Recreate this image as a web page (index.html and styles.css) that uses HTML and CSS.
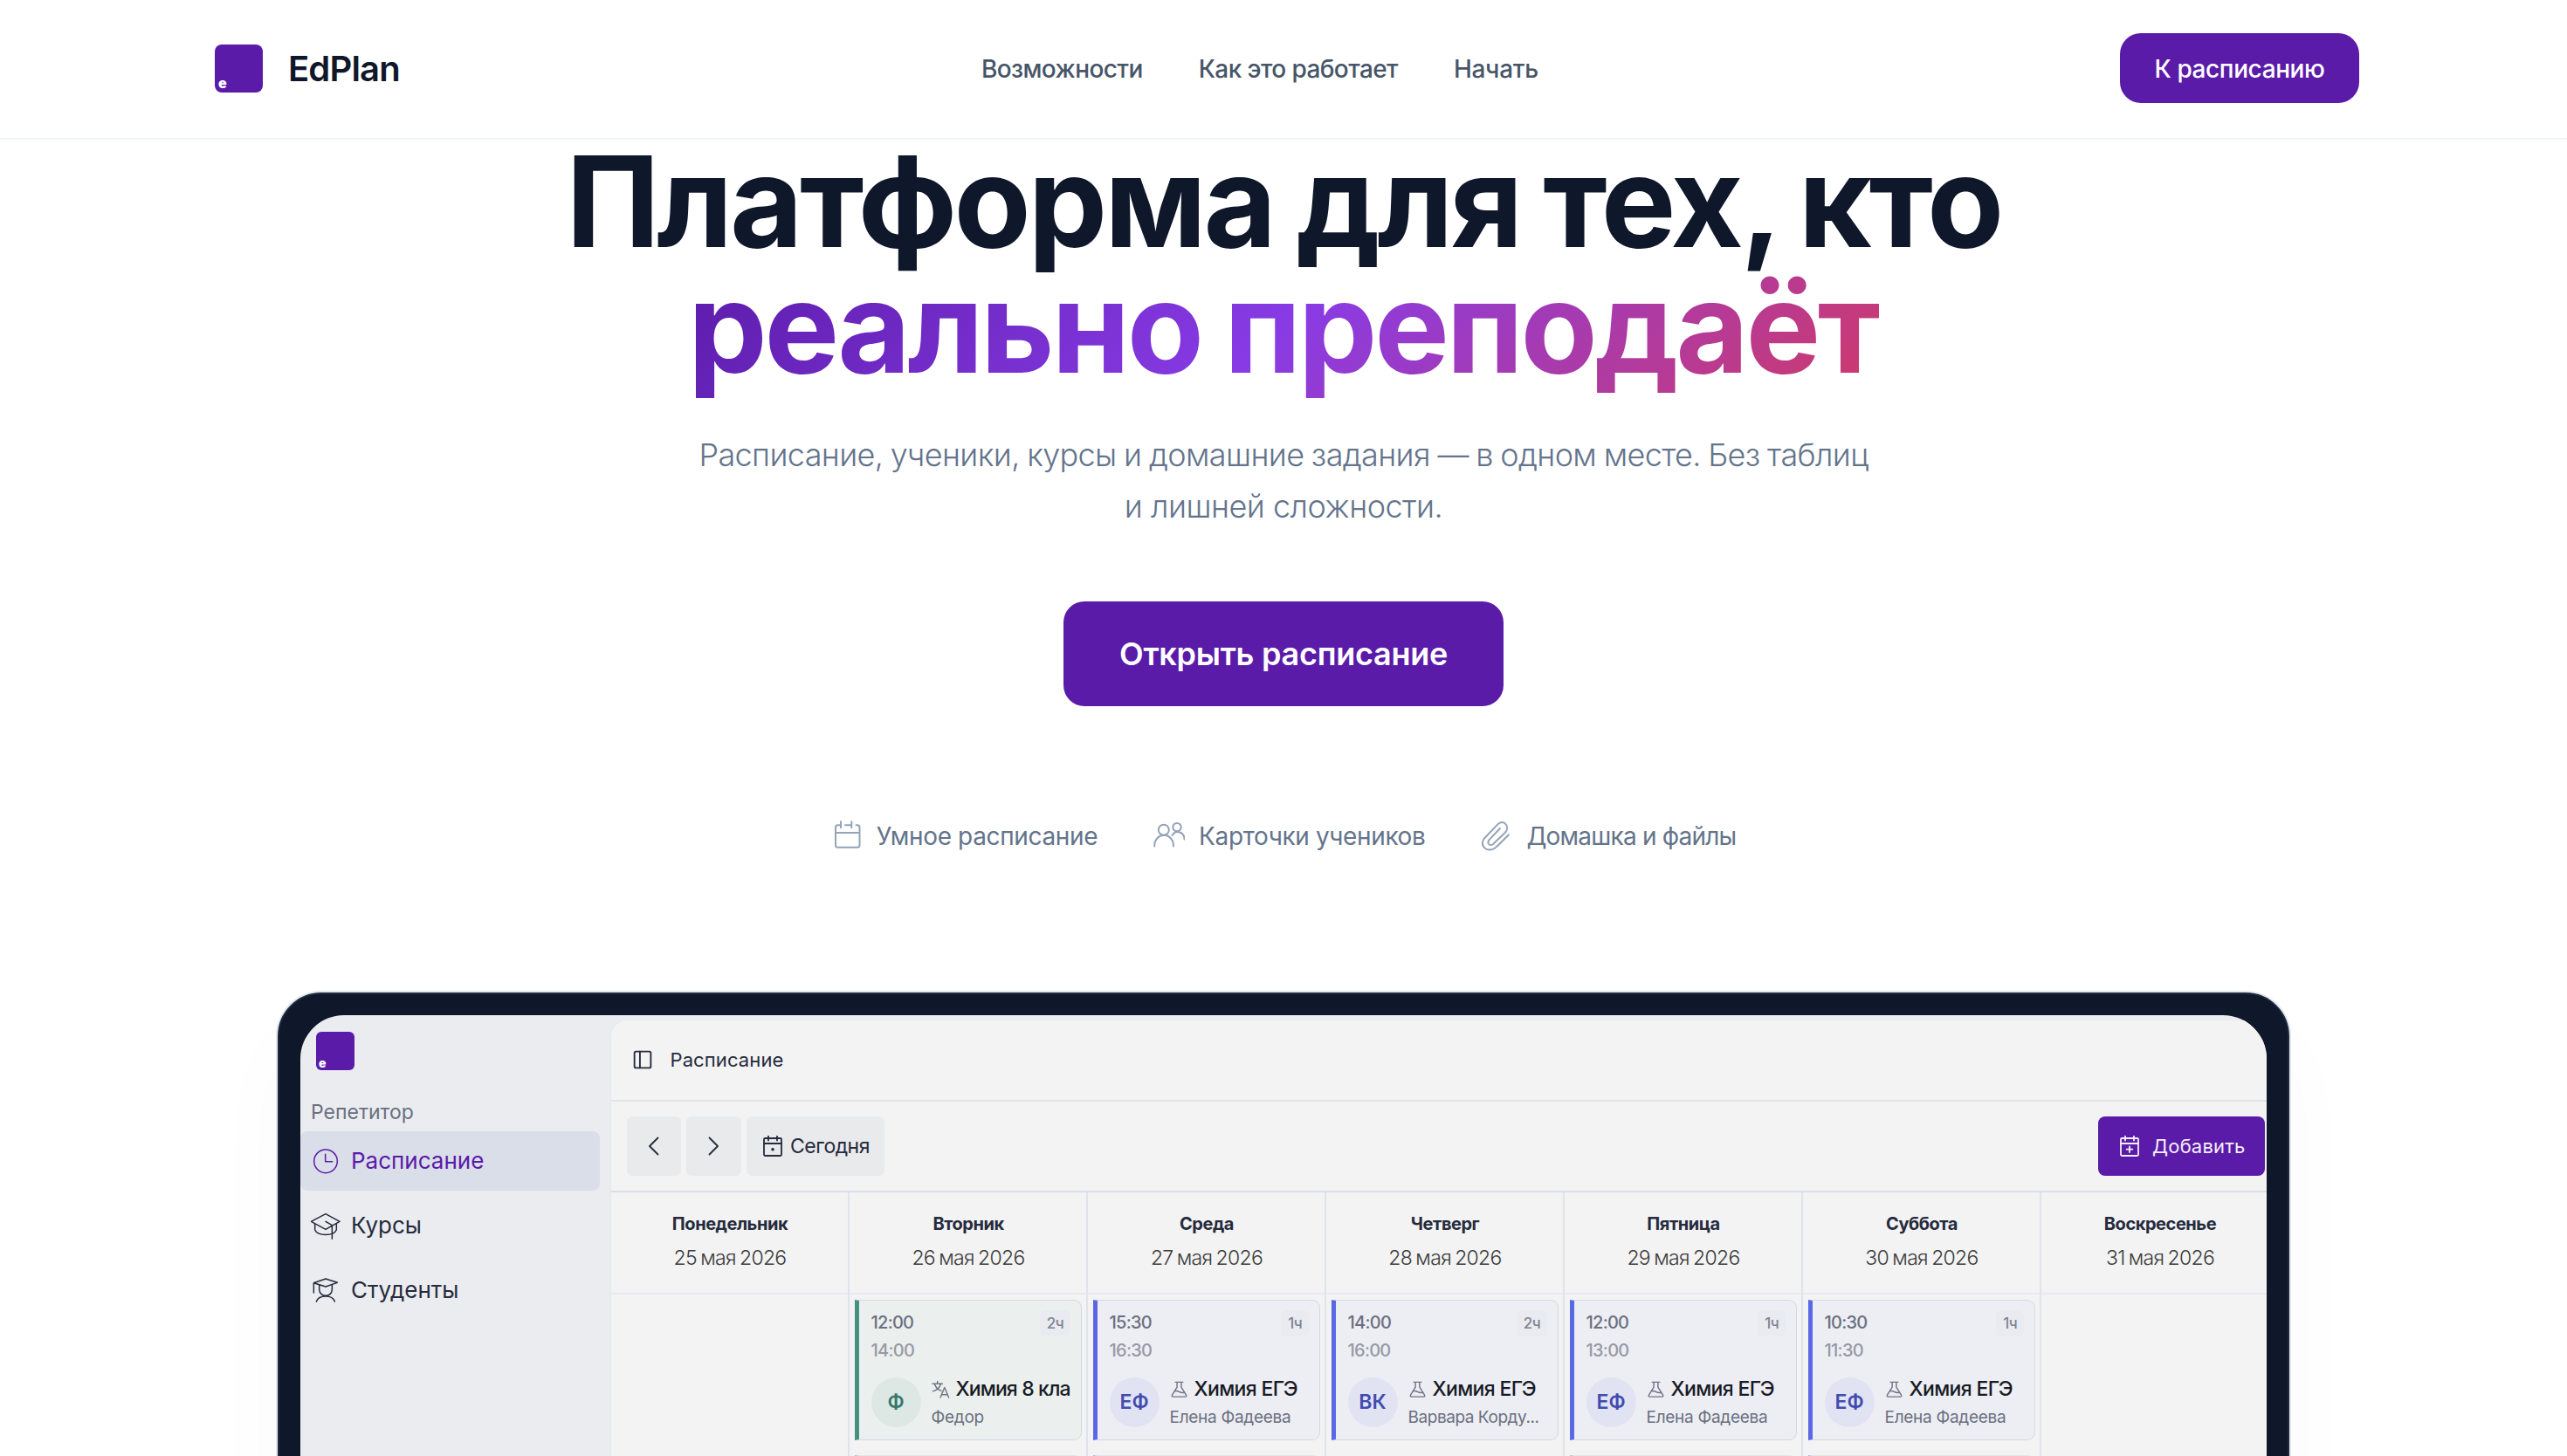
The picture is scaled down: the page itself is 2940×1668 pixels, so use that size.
FILE: index.html
```html
<!DOCTYPE html>
<html lang="ru">
<head>
<meta charset="utf-8">
<title>EdPlan</title>
<link rel="stylesheet" href="styles.css">
</head>
<body>
<svg class="sprite" aria-hidden="true">
  <symbol id="flask" viewBox="0 0 22 22"><path d="M6.5 2.5h9M8.5 2.5v6L2.6 18q-.8 2 1.2 2h14.4q2 0 1.2-2L13.500 8.500v-6M5.500 13.500q3-1 5.500.5t6.500 1"/></symbol>
  <symbol id="translate" viewBox="0 0 22 22"><path d="M1 4.500h12M7 1.500v3M3.500 4.500q1.500 6 8 8.500M11 4.500Q9 11.500 1.500 13.500M10.500 21l5-12 5 12M12.200 17.500h6.600"/></symbol>
</svg>

<header class="site-header">
  <a class="brand"><span class="logo">e</span><span class="brand-name">EdPlan</span></a>
  <nav class="nav"><a class="nav-a">Возможности</a><a class="nav-b">Как это работает</a><a class="nav-c">Начать</a></nav>
  <a class="cta-small">К расписанию</a>
</header>

<main class="hero">
  <h1 class="title">Платформа для тех, кто<br><span class="accent">реально преподаёт</span></h1>
  <p class="lead"><span class="lead-first">Расписание, ученики, курсы и домашние задания — в одном месте. Без таблиц</span><br><span>и лишней сложности.</span></p>
  <a class="cta">Открыть расписание</a>
  <ul class="features">
    <li><svg viewBox="951 939 36 36"><path d="M962 945.300h-3.500q-2.500 0-2.500 2.500v20.500q0 2.500 2.500 2.500h22.500q2.500 0 2.500-2.500v-20.500q0-2.500-2.500-2.500h-1.500M967 945.300h7.300M962 941.300v7M974.300 941.300v7M956 954h27.500"/></svg><span class="f-a">Умное расписание</span></li>
    <li><svg viewBox="1321 939 36 36"><circle cx="1332.800" cy="950.700" r="6"/><circle cx="1348" cy="947.600" r="4.700"/><path d="M1322.200 969.500c0-17 21.800-17 21.800 0M1342.500 957c4-6.500 14-4.500 14 4.500"/></svg><span class="f-b">Карточки учеников</span></li>
    <li><svg viewBox="50 42 108 108" class="clip"><path d="M146 94L105 134C90 150 70 148 62 138C52 128 54 112 66 102L108 58C118 48 130 50 136 58C143 66 141 78 134 86L92 126C86 131 80 130 77 126C73 121 75 116 80 110L116 72"/></svg><span class="f-c">Домашка и файлы</span></li>
  </ul>
</main>

<section class="device">
  <div class="screen">
    <aside class="sidebar">
      <span class="logo logo-sm">e</span>
      <div class="group">Репетитор</div>
      <a class="item active"><svg viewBox="36 450 102 102"><circle cx="87" cy="502" r="40"/><path d="M86 478V503H110"/></svg><span>Расписание</span></a>
      <a class="item"><svg viewBox="36 674 102 102"><path d="M37 711L87 685L135 711L87 738ZM50 719V740C60 762 114 762 124 740V719M87 711L109 724V771"/></svg><span>Курсы</span></a>
      <a class="item"><svg viewBox="36 896 102 102"><path d="M46 922L87 908L127 921L87 935ZM46 922V956M65 929V945C66 973 108 973 109 945V929M55 986C64 962 110 962 118 986"/></svg><span>Студенты</span></a>
    </aside>
    <div class="panel">
      <div class="topbar"><svg viewBox="0 0 20 20"><rect x="1.500" y="1.500" width="17" height="17" rx="1.500"/><path d="M7.200 1.500v17"/></svg><span>Расписание</span></div>
      <div class="toolbar">
        <a class="tool square"><svg viewBox="0 0 24 24"><path d="M16.500 2.500L7 12l9.500 9.500"/></svg></a>
        <a class="tool square"><svg viewBox="0 0 24 24"><path d="M7.500 2.500L17 12l-9.500 9.500"/></svg></a>
        <a class="tool today"><svg viewBox="0 0 24 24"><rect x="2" y="3" width="20" height="20" rx="1.200"/><path d="M2 9h20M7 .5v5M17 .5v5"/><circle cx="12" cy="15.700" r="1.800" class="dot"/></svg><span>Сегодня</span></a>
        <a class="tool add"><svg viewBox="0 0 24 24"><rect x="2" y="3" width="20" height="20" rx="1.200"/><path d="M2 9h20M7 .5v5M17 .5v5M12 12.500v6.500M8.700 15.700h6.600"/></svg><span>Добавить</span></a>
      </div>
      <div class="week">
        <div class="day"><div class="day-head"><b>Понедельник</b><span>25 мая 2026</span></div></div>
        <div class="day"><div class="day-head"><b>Вторник</b><span>26 мая 2026</span></div>
          <article class="lesson green"><div class="when"><div><time>12:00</time><time class="end">14:00</time></div><i class="len">2ч</i></div>
            <div class="who"><span class="avatar">Ф</span><div class="info"><div class="subject long"><svg><use href="#translate"/></svg><span>Химия 8 кла</span></div><div class="name">Федор</div></div></div></article>
          <article class="lesson next"></article>
        </div>
        <div class="day"><div class="day-head"><b>Среда</b><span>27 мая 2026</span></div>
          <article class="lesson"><div class="when"><div><time>15:30</time><time class="end">16:30</time></div><i class="len">1ч</i></div>
            <div class="who"><span class="avatar">ЕФ</span><div class="info"><div class="subject"><svg><use href="#flask"/></svg><span>Химия ЕГЭ</span></div><div class="name">Елена Фадеева</div></div></div></article>
          <article class="lesson next"></article>
        </div>
        <div class="day"><div class="day-head"><b>Четверг</b><span>28 мая 2026</span></div>
          <article class="lesson"><div class="when"><div><time>14:00</time><time class="end">16:00</time></div><i class="len">2ч</i></div>
            <div class="who"><span class="avatar">ВК</span><div class="info"><div class="subject"><svg><use href="#flask"/></svg><span>Химия ЕГЭ</span></div><div class="name cut">Варвара Корду...</div></div></div></article>
        </div>
        <div class="day"><div class="day-head"><b>Пятница</b><span>29 мая 2026</span></div>
          <article class="lesson"><div class="when"><div><time>12:00</time><time class="end">13:00</time></div><i class="len">1ч</i></div>
            <div class="who"><span class="avatar">ЕФ</span><div class="info"><div class="subject"><svg><use href="#flask"/></svg><span>Химия ЕГЭ</span></div><div class="name">Елена Фадеева</div></div></div></article>
          <article class="lesson green next"></article>
        </div>
        <div class="day"><div class="day-head"><b>Суббота</b><span>30 мая 2026</span></div>
          <article class="lesson"><div class="when"><div><time>10:30</time><time class="end">11:30</time></div><i class="len">1ч</i></div>
            <div class="who"><span class="avatar">ЕФ</span><div class="info"><div class="subject"><svg><use href="#flask"/></svg><span>Химия ЕГЭ</span></div><div class="name">Елена Фадеева</div></div></div></article>
          <article class="lesson next"></article>
        </div>
        <div class="day"><div class="day-head"><b>Воскресенье</b><span>31 мая 2026</span></div></div>
      </div>
    </div>
  </div>
</section>
</body>
</html>
```
FILE: styles.css
```css
* { box-sizing: border-box; }
body {
  margin: 0;
  height: 1668px;
  overflow: hidden;
  background: #fff;
  color: #0f172a;
  font-family: Inter, "Liberation Sans", sans-serif;
}
svg { display: block; flex: none; fill: none; stroke: currentColor; stroke-linecap: round; stroke-linejoin: round; }
.sprite { width: 0; height: 0; position: absolute; }

/* header */
.site-header {
  height: 160px;
  padding: 0 238px 2px 246px;
  border-bottom: 2px solid #f1f5f9;
  display: flex;
  align-items: center;
  justify-content: space-between;
}
.brand { display: flex; align-items: center; gap: 29px; }
.brand-name { font-size: 40px; font-weight: 600; letter-spacing: -.85px; }
.logo {
  width: 55px; height: 55px;
  border-radius: 8px;
  background: #5b1ba9;
  color: #fff;
  font-size: 16px; font-weight: 900; line-height: 20px;
  display: flex; align-items: flex-end;
  padding: 0 0 1px 4px;
}
.nav { display: flex; gap: 64px; padding-top: 2px; font-size: 28px; font-weight: 500; color: #475569; letter-spacing: -.6px; }
.nav-c { letter-spacing: -.3px; }
.cta-small {
  width: 274px; height: 80px;
  padding-top: 1px;
  border-radius: 24px;
  background: #5b1ba9; color: #fff;
  font-size: 28px; font-weight: 500; letter-spacing: -.4px;
  display: flex; align-items: center; justify-content: center;
}

/* hero */
.hero { display: flex; flex-direction: column; align-items: center; text-align: center; }
.title { margin: -1px 0 0; font-size: 144px; line-height: 144px; font-weight: 700; letter-spacing: -3.4px; word-spacing: -4.500px; white-space: nowrap; }
.accent {
  background: linear-gradient(135deg, #5b1ba9 0%, #883be5 50%, #d03a68 100%);
  -webkit-background-clip: text; background-clip: text;
  color: transparent;
}
.lead { margin: 45px 0 0; font-size: 36px; line-height: 58.5px; font-weight: 300; color: #64748b; letter-spacing: -.5px; white-space: nowrap; }
.lead-first { letter-spacing: -.64px; word-spacing: -1px; }
.cta {
  margin-top: 80px;
  width: 504px; height: 120px;
  border-radius: 24px;
  background: #5b1ba9; color: #fff;
  font-size: 36px; font-weight: 600; letter-spacing: -.26px;
  display: flex; align-items: center; justify-content: center;
}
.features { margin: 130px 0 0; padding: 0; list-style: none; display: flex; gap: 64px; font-size: 28px; line-height: 38px; color: #64748b; letter-spacing: -.36px; }
.features li { display: flex; gap: 16px; height: 36px; }
.features svg { width: 36px; height: 36px; stroke-width: 2; color: #94a3b8; }
.features svg.clip { stroke-width: 6; }
.features .f-c { letter-spacing: -.8px; }

/* device */
.device {
  width: 2304px; height: 1400px;
  margin: 161.500px auto 0;
  padding: 24px;
  border: 2px solid #1e293b;
  border-radius: 50px;
  background: #0f172a;
  box-shadow: 0 0 0 2px #e2e8f0, 0 50px 100px rgba(15, 23, 42, .025);
}
.screen { height: 1340px; border-radius: 50px; overflow: hidden; background: #ebecf0; display: flex; color: #252b3d; }

.sidebar { flex: 0 0 355.500px; padding: 19px 12.500px 0 0; }
.logo-sm { width: 44px; height: 44px; margin-left: 18px; border-radius: 6px; font-size: 14px; padding: 0 0 0 3px; line-height: 17px; }
.group { margin: 32px 0 0 12px; font-size: 23px; line-height: 32px; color: #6b7080; }
.item { height: 68px; margin-bottom: 6px; border-radius: 8px; display: flex; align-items: center; padding-left: 12px; gap: 12px; font-size: 26px; }
.item svg { width: 34px; height: 34px; stroke-width: 4.500; }
.item.active { margin-top: 6px; background: #dadee8; color: #5b1ba9; }

.panel { flex: 1 0 1911px; margin-top: 6.500px; border-top-left-radius: 18px; background: #f3f3f3; box-shadow: -1px 0 0 #e6e8ee; }
.topbar { height: 92.500px; border-bottom: 2px solid #e1e3ea; display: flex; align-items: center; padding-left: 25px; gap: 21px; font-size: 22px; letter-spacing: .11px; }
.topbar svg { width: 22px; height: 22px; stroke-width: 1.700; }
.toolbar { width: 1896.500px; height: 104px; border-bottom: 2px solid #dadee6; display: flex; gap: 6px; padding: 17px 2px 0 18px; }
.tool { height: 68.500px; border-radius: 6px; background: #e9eaec; display: flex; align-items: center; justify-content: center; }
.tool svg { width: 24px; height: 24px; stroke-width: 1.800; }
.tool .dot { fill: currentColor; stroke: none; }
.square { width: 62.500px; }
.today { width: 158px; padding: 1px 0 0 2px; gap: 8px; font-size: 23px; letter-spacing: -.5px; }
.add { width: 191.500px; padding: 1px 0 0 2px; margin-left: auto; border-radius: 8px; background: #5b1ba9; color: #f3f0f8; gap: 14px; font-size: 22px; letter-spacing: .17px; }

.week { display: grid; grid-template-columns: repeat(7, 273px); }
.day { height: 700px; border-right: 2px solid #dfe3ec; }
.day-head { height: 117px; border-bottom: 2px solid #e9eaf0; padding: 20px 0 0 2px; text-align: center; }
.day-head b, .day-head span { display: block; line-height: 32px; }
.day-head b { font-size: 20px; letter-spacing: -.45px; }
.day-head span { margin-top: 7px; font-size: 23px; font-weight: 300; letter-spacing: -.7px; word-spacing: -1.500px; color: #3c3c3c; }

.lesson {
  width: 260px; height: 160.500px;
  margin: 6.500px 0 0 6.500px;
  padding: 9px 12px 0 13.500px;
  border: 1.500px solid #d6d8e0;
  border-left: 5px solid #5b68e6;
  border-radius: 0 9px 9px 0;
  background: #edeef4;
}
.lesson.green { border-left-color: #43917f; background: #ebf0ee; }
.lesson.next { margin-top: 17px; opacity: .5; }
.when { display: flex; justify-content: space-between; }
.when time { display: block; font-size: 20px; line-height: 32px; font-weight: 500; letter-spacing: -.75px; color: #6b7080; }
.when .end { color: #9799a5; }
.len { height: 30px; margin-top: 2px; padding: 0 8px; border-radius: 6px; background: #e9ebf0; font-style: normal; font-size: 17px; line-height: 31px; font-weight: 500; letter-spacing: -.6px; color: #808492; }
.who { display: flex; align-items: center; gap: 12px; margin-top: 12px; }
.avatar { flex: none; width: 57px; height: 57px; margin-top: -3px; border-radius: 50%; background: #e1e3f2; color: #424cb0; font-size: 23px; font-weight: 600; display: flex; align-items: center; justify-content: center; }
.green .avatar { background: #dde8e5; color: #37786d; }
.info { min-width: 0; white-space: nowrap; }
.subject { display: flex; align-items: center; gap: 7px; line-height: 32px; font-size: 23px; font-weight: 500; letter-spacing: -.65px; color: #181b25; }
.subject.long { letter-spacing: -.87px; }
.subject svg { width: 21px; height: 21px; stroke-width: 1.500; color: #6f7483; }
.name { font-size: 19px; line-height: 33px; letter-spacing: -.28px; color: #6b7080; }
.name.cut { letter-spacing: -.45px; }
```
